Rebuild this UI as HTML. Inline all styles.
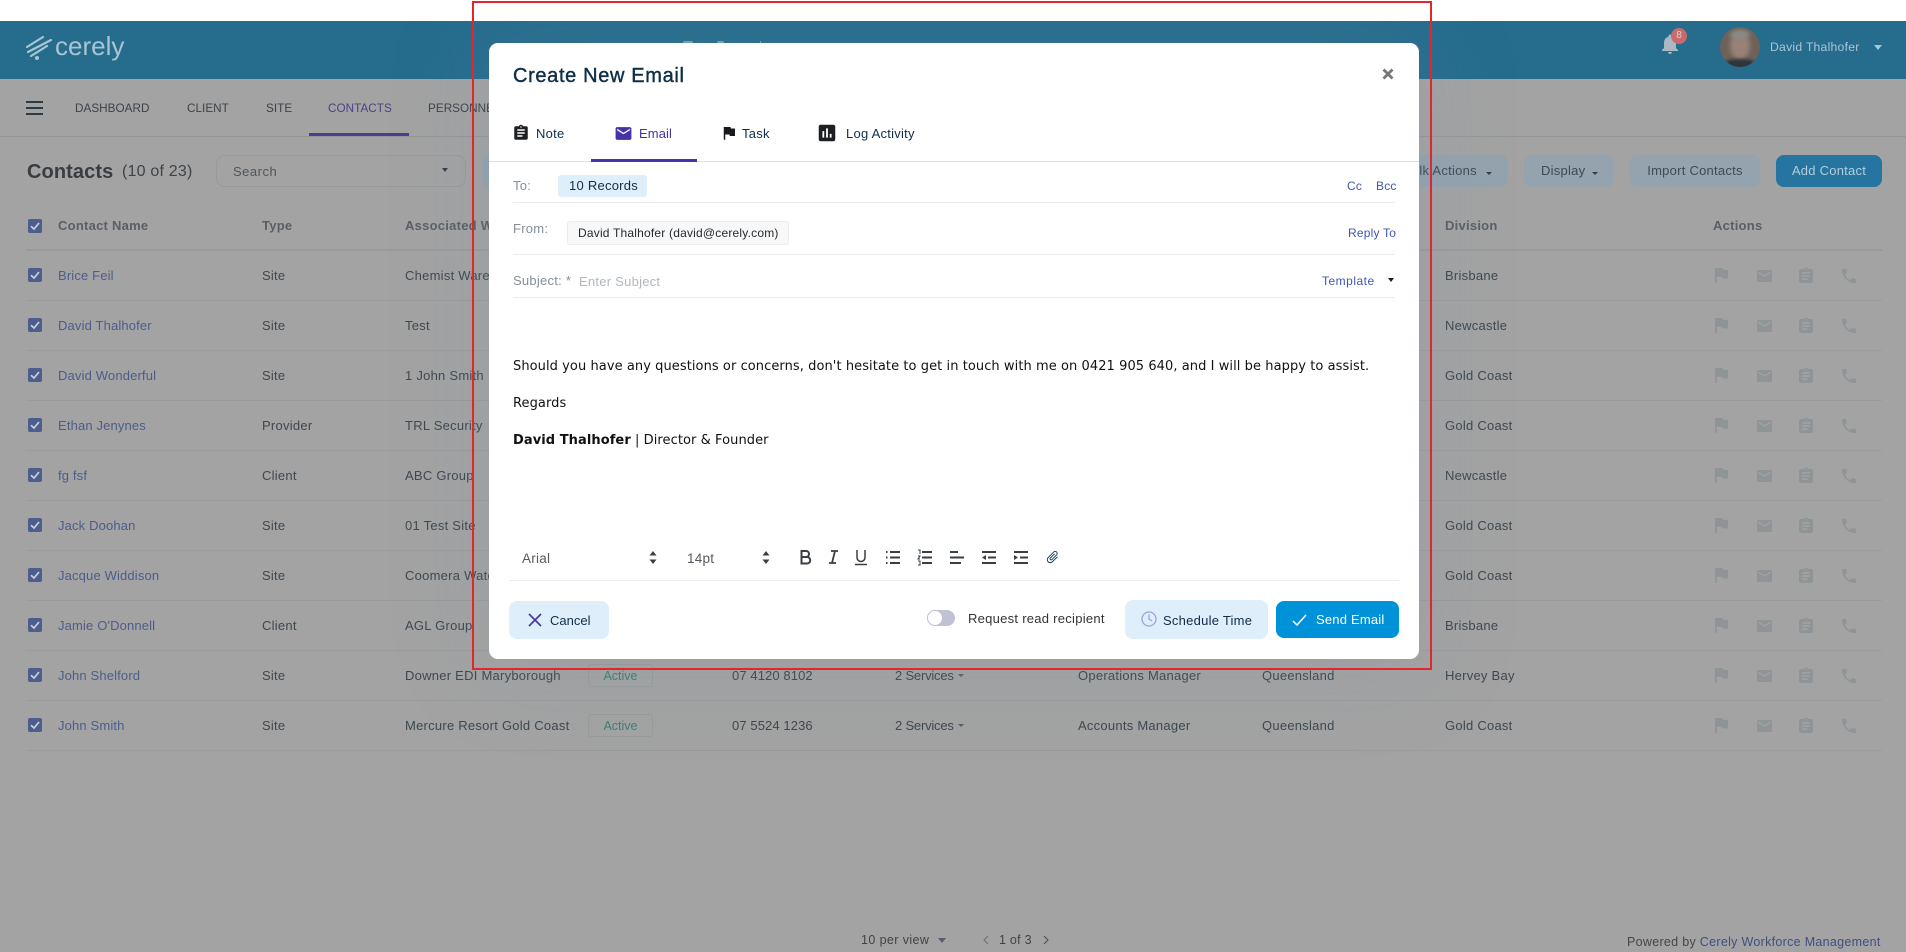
<!DOCTYPE html>
<html><head><meta charset="utf-8"><title>Create New Email</title>
<style>
*{box-sizing:border-box}
html,body{margin:0;padding:0;width:1906px;height:952px;overflow:hidden;background:#a3a3a3;font-family:"Liberation Sans",sans-serif}
#top{position:absolute;left:0;top:0;width:1906px;height:21px;background:#fff;z-index:5}
#hd{position:absolute;left:0;top:21px;width:1906px;height:58px;background:#256c8d}
.t{position:absolute;white-space:nowrap;line-height:20px;font-size:13px;letter-spacing:.25px;color:#3d4850;transform:translateY(1px)}
.a{position:absolute;display:block}
.nav{font-size:11.7px;color:#3c4247;top:98px;letter-spacing:.05px}
.hline{position:absolute;left:26px;width:1856px;height:1px;background:#999b9c}
.th{top:215px;font-weight:bold;color:#595f67;font-size:13px;letter-spacing:.25px}
.r{position:absolute;left:0;width:1906px;height:50px}
.r .t{top:15px}
.cb{position:absolute;left:28px;top:18px;width:14px;height:14px;border-radius:2px;background:#4c5d8e}
.cb svg{position:absolute;left:2px;top:2px}
.n{left:58px;color:#4c5d8c;letter-spacing:.15px}
.ty{left:262px}.as{left:405px}.ph{left:732px;letter-spacing:.1px}.sv{left:895px;letter-spacing:-.2px}.po{left:1078px}.st{left:1262px}.di{left:1445px}
.ac{position:absolute;left:1710px;top:15px;width:160px;height:24px;overflow:visible}
.stat{position:absolute;left:588px;top:14px;width:65px;height:23px;border:1px solid #969c9a;border-radius:3px;text-align:center;line-height:22px;color:#3d7f75;font-size:12.5px}
.btn{position:absolute;top:155px;height:32px;border-radius:8px;background:#94a3ae;text-align:center;line-height:32px;font-size:13px;color:#3e4a54;letter-spacing:.25px}
#modal{position:absolute;left:489px;top:43px;width:930px;height:616px;background:#fff;border-radius:9px;box-shadow:0 0 90px 15px rgba(120,145,170,.16)}
.m{color:#0e2e48}
.lbl{color:#84909a;font-size:13px}
.lnk{color:#3f57b0;font-size:12px;letter-spacing:.2px}
.ln{position:absolute;height:1px;background:#e9ebee}
#red{position:absolute;left:472px;top:1px;width:960px;height:669px;border:2px solid #e3262b;pointer-events:none;z-index:6}
.ed{font-family:"DejaVu Sans",sans-serif;font-size:13px;color:#111;letter-spacing:.07px;transform:none}
</style></head><body>
<svg width="0" height="0" style="position:absolute">
<defs>
<symbol id="flag" viewBox="0 0 24 24"><path d="M14.4 6L14 4H5v17h2v-7h5.6l.4 2h7V6z"/></symbol>
<symbol id="mail" viewBox="0 0 24 24"><path d="M20 4H4c-1.1 0-2 .9-2 2v12c0 1.1.9 2 2 2h16c1.1 0 2-.9 2-2V6c0-1.1-.9-2-2-2zm0 4l-8 5-8-5V6l8 5 8-5v2z"/></symbol>
<symbol id="clip" viewBox="0 0 24 24"><path d="M19 3h-4.18C14.4 1.84 13.3 1 12 1c-1.3 0-2.4.84-2.82 2H5c-1.1 0-2 .9-2 2v14c0 1.1.9 2 2 2h14c1.1 0 2-.9 2-2V5c0-1.1-.9-2-2-2zm-7 0c.55 0 1 .45 1 1s-.45 1-1 1-1-.45-1-1 .45-1 1-1zm2 14H7v-2h7v2zm3-4H7v-2h10v2zm0-4H7V7h10v2z"/></symbol>
<symbol id="phone" viewBox="0 0 24 24"><path d="M6.62 10.79c1.44 2.83 3.76 5.14 6.59 6.59l2.2-2.2c.27-.27.67-.36 1.02-.24 1.12.37 2.33.57 3.57.57.55 0 1 .45 1 1V20c0 .55-.45 1-1 1-9.39 0-17-7.61-17-17 0-.55.45-1 1-1h3.5c.55 0 1 .45 1 1 0 1.25.2 2.45.57 3.57.11.35.03.74-.25 1.02l-2.2 2.2z"/></symbol>
<symbol id="poll" viewBox="0 0 24 24"><path d="M19 3H5c-1.1 0-2 .9-2 2v14c0 1.1.9 2 2 2h14c1.1 0 2-.9 2-2V5c0-1.1-.9-2-2-2zM9 17H7v-7h2v7zm4 0h-2V7h2v10zm4 0h-2v-4h2v4z"/></symbol>
<symbol id="acts" viewBox="0 0 160 24" overflow="visible"><g fill="#8f9497">
<use href="#flag" x=".6" y="-.5" width="21" height="21"/><use href="#mail" x="45.500" y="2" width="18" height="18"/><use href="#clip" x="86.700" y="1.700" width="18.600" height="18.600"/><use href="#phone" x="129.600" y="1.500" width="19" height="19"/></g></symbol>
<symbol id="chk" viewBox="0 0 10 10"><path d="M1 5.2L4 8l5-6" fill="none" stroke="#c9cfdc" stroke-width="1.7"/></symbol>
</defs></svg>

<div id="top"></div>
<div id="hd"></div>
<svg class="a" style="left:26px;top:34px" width="27" height="27" viewBox="0 0 27 27" fill="none" stroke="#a9c5d4" stroke-width="2.2" stroke-linecap="round"><path d="M1 13L17 3M2 18L25 6M5 22L21 12"/><circle cx="11" cy="24" r="2" fill="#a9c5d4" stroke="none"/></svg>
<span class="t" style="left:55px;top:34px;font-size:26px;line-height:24px;color:#a9c5d4;letter-spacing:0;transform:none">cerely</span>
<svg class="a" style="left:1658px;top:32px" width="24" height="24" viewBox="0 0 24 24" fill="#a9b9c2"><path d="M12 22c1.1 0 2-.9 2-2h-4c0 1.1.89 2 2 2zm6-6v-5c0-3.07-1.64-5.64-4.5-6.32V4c0-.83-.67-1.5-1.5-1.5s-1.5.67-1.5 1.5v.68C7.63 5.36 6 7.92 6 11v5l-2 2v1h16v-1l-2-2z"/></svg>
<div class="a" style="left:1671px;top:28px;width:16px;height:16px;border-radius:50%;background:#c96b6e;color:#e4c9c9;font-size:10px;line-height:16px;text-align:center">8</div>
<div class="a" style="left:1720px;top:27px;width:40px;height:40px;border-radius:50%;overflow:hidden;background:#6c6259">
<div class="a" style="left:10px;top:5px;width:20px;height:28px;border-radius:50%;background:#988176;filter:blur(2px)"></div>
<div class="a" style="left:10px;top:3px;width:20px;height:9px;border-radius:50%;background:#8a8a86;filter:blur(2px)"></div>
<div class="a" style="left:4px;top:32px;width:32px;height:14px;background:#2f353c;border-radius:40%;filter:blur(1.5px)"></div></div>
<span class="t" style="left:1770px;top:37px;font-size:12.2px;color:#a9c5d4;transform:none">David Thalhofer</span>
<div class="a" style="left:1874px;top:45px;border:4px solid transparent;border-top:5px solid #a9c5d4;border-left-width:4px;border-right-width:4px"></div>

<div class="a" style="left:26px;top:101px;width:17px;height:2px;background:#2d3b45"></div>
<div class="a" style="left:26px;top:107px;width:17px;height:2px;background:#2d3b45"></div>
<div class="a" style="left:26px;top:113px;width:17px;height:2px;background:#2d3b45"></div>
<span class="t nav" style="left:75px">DASHBOARD</span>
<span class="t nav" style="left:187px">CLIENT</span>
<span class="t nav" style="left:266px">SITE</span>
<span class="t nav" style="left:328px;color:#4a4288">CONTACTS</span>
<span class="t nav" style="left:428px">PERSONNEL</span>
<div class="a" style="left:0;top:136px;width:1906px;height:1px;background:#94989c"></div>
<div class="a" style="left:309px;top:133px;width:100px;height:3px;background:#4a3d8c"></div>

<span class="t" style="left:27px;top:161px;font-size:20px;font-weight:bold;color:#383d41;letter-spacing:.1px">Contacts</span>
<span class="t" style="left:122px;top:161px;font-size:16px;color:#3d4348;letter-spacing:.2px">(10 of 23)</span>
<div class="a" style="left:216px;top:155px;width:250px;height:32px;border:1px solid #979a9c;border-radius:9px"></div>
<span class="t" style="left:233px;top:161px;color:#4e5459;letter-spacing:.5px">Search</span>
<div class="a" style="left:442px;top:168px;border:3.5px solid transparent;border-top:4px solid #333d45"></div>
<div class="btn" style="left:482px;width:1026px"></div>
<span class="t" style="left:1403px;top:160px;color:#3e4a54;font-size:13px">Bulk Actions</span>
<div class="a" style="left:1486px;top:172px;border:3px solid transparent;border-top:3.5px solid #333d45"></div>
<div class="btn" style="left:1524px;width:90px;text-align:left;padding-left:17px">Display</div>
<div class="a" style="left:1592px;top:172px;border:3px solid transparent;border-top:3.5px solid #333d45"></div>
<div class="btn" style="left:1630px;width:130px">Import Contacts</div>
<div class="btn" style="left:1776px;width:106px;background:#2675a0;color:#b3cdd9">Add Contact</div>

<div class="cb" style="top:219px"><svg width="10" height="10"><use href="#chk"/></svg></div>
<span class="t th" style="left:58px">Contact Name</span>
<span class="t th" style="left:262px">Type</span>
<span class="t th" style="left:405px">Associated With</span>
<span class="t th" style="left:1445px">Division</span>
<span class="t th" style="left:1713px">Actions</span>
<div class="hline" style="top:249px;height:2px"></div>

<div class="r" style="top:250px"><div class="cb"><svg width="10" height="10"><use href="#chk"/></svg></div><span class="t n">Brice Feil</span><span class="t ty">Site</span><span class="t as">Chemist Warehouse</span><span class="t di">Brisbane</span><svg class="ac"><use href="#acts"/></svg></div>
<div class="hline" style="top:300px"></div>
<div class="r" style="top:300px"><div class="cb"><svg width="10" height="10"><use href="#chk"/></svg></div><span class="t n">David Thalhofer</span><span class="t ty">Site</span><span class="t as">Test</span><span class="t di">Newcastle</span><svg class="ac"><use href="#acts"/></svg></div>
<div class="hline" style="top:350px"></div>
<div class="r" style="top:350px"><div class="cb"><svg width="10" height="10"><use href="#chk"/></svg></div><span class="t n">David Wonderful</span><span class="t ty">Site</span><span class="t as">1 John Smith</span><span class="t di">Gold Coast</span><svg class="ac"><use href="#acts"/></svg></div>
<div class="hline" style="top:400px"></div>
<div class="r" style="top:400px"><div class="cb"><svg width="10" height="10"><use href="#chk"/></svg></div><span class="t n">Ethan Jenynes</span><span class="t ty">Provider</span><span class="t as">TRL Security</span><span class="t di">Gold Coast</span><svg class="ac"><use href="#acts"/></svg></div>
<div class="hline" style="top:450px"></div>
<div class="r" style="top:450px"><div class="cb"><svg width="10" height="10"><use href="#chk"/></svg></div><span class="t n">fg fsf</span><span class="t ty">Client</span><span class="t as">ABC Group</span><span class="t di">Newcastle</span><svg class="ac"><use href="#acts"/></svg></div>
<div class="hline" style="top:500px"></div>
<div class="r" style="top:500px"><div class="cb"><svg width="10" height="10"><use href="#chk"/></svg></div><span class="t n">Jack Doohan</span><span class="t ty">Site</span><span class="t as">01 Test Site</span><span class="t di">Gold Coast</span><svg class="ac"><use href="#acts"/></svg></div>
<div class="hline" style="top:550px"></div>
<div class="r" style="top:550px"><div class="cb"><svg width="10" height="10"><use href="#chk"/></svg></div><span class="t n">Jacque Widdison</span><span class="t ty">Site</span><span class="t as">Coomera Waters</span><span class="t di">Gold Coast</span><svg class="ac"><use href="#acts"/></svg></div>
<div class="hline" style="top:600px"></div>
<div class="r" style="top:600px"><div class="cb"><svg width="10" height="10"><use href="#chk"/></svg></div><span class="t n">Jamie O'Donnell</span><span class="t ty">Client</span><span class="t as">AGL Group</span><span class="t di">Brisbane</span><svg class="ac"><use href="#acts"/></svg></div>
<div class="hline" style="top:650px"></div>
<div class="r" style="top:650px"><div class="cb"><svg width="10" height="10"><use href="#chk"/></svg></div><span class="t n">John Shelford</span><span class="t ty">Site</span><span class="t as">Downer EDI Maryborough</span><div class="stat">Active</div><span class="t ph">07 4120 8102</span><span class="t sv">2 Services</span><div class="a" style="left:958px;top:24px;border:3px solid transparent;border-top:3.5px solid #56616a"></div><span class="t po">Operations Manager</span><span class="t st">Queensland</span><span class="t di">Hervey Bay</span><svg class="ac"><use href="#acts"/></svg></div>
<div class="hline" style="top:700px"></div>
<div class="r" style="top:700px"><div class="cb"><svg width="10" height="10"><use href="#chk"/></svg></div><span class="t n">John Smith</span><span class="t ty">Site</span><span class="t as">Mercure Resort Gold Coast</span><div class="stat">Active</div><span class="t ph">07 5524 1236</span><span class="t sv">2 Services</span><div class="a" style="left:958px;top:24px;border:3px solid transparent;border-top:3.5px solid #56616a"></div><span class="t po">Accounts Manager</span><span class="t st">Queensland</span><span class="t di">Gold Coast</span><svg class="ac"><use href="#acts"/></svg></div>
<div class="hline" style="top:750px"></div>

<span class="t" style="left:861px;top:930px;font-size:12.5px;color:#3f4348;letter-spacing:.4px;transform:none">10 per view</span>
<div class="a" style="left:938px;top:938px;border:4px solid transparent;border-top:5px solid #585d70"></div>
<svg class="a" style="left:982px;top:935px" width="8" height="10" fill="none" stroke="#6a6e72" stroke-width="1"><path d="M6 1L2 5l4 4"/></svg>
<span class="t" style="left:999px;top:930px;font-size:12.5px;color:#3f4348;transform:none">1 of 3</span>
<svg class="a" style="left:1042px;top:935px" width="8" height="10" fill="none" stroke="#4a4e52" stroke-width="1"><path d="M2 1l4 4-4 4"/></svg>
<span class="t" style="left:1627px;top:932px;font-size:12.5px;color:#42474c;letter-spacing:.3px;transform:none">Powered by <span style="color:#3f5080">Cerely Workforce Management</span></span>

<div class="a" style="left:683px;top:41px;width:10px;height:2px;border-radius:5px 5px 0 0;background:#7f9fb0"></div>
<div class="a" style="left:717px;top:41px;width:7px;height:2px;border-radius:4px 4px 0 0;background:#7f9fb0"></div>
<div class="a" style="left:760px;top:41px;width:1px;height:2px;background:#7f9fb0"></div>

<div id="modal"></div>
<span class="t m" style="left:513px;top:65px;font-size:20px;letter-spacing:.65px;-webkit-text-stroke:.4px #0e2e48">Create New Email</span>
<svg class="a" style="left:1382px;top:68px" width="12" height="12" stroke="#777" stroke-width="2.8"><path d="M1.5 1.5l9 9M10.5 1.5l-9 9"/></svg>

<svg class="a" style="left:512px;top:124px" width="18" height="18" fill="#1d1f22"><use href="#clip"/></svg>
<span class="t m" style="left:536px;top:123px">Note</span>
<svg class="a" style="left:614px;top:124px" width="19" height="19" fill="#4533a8"><use href="#mail"/></svg>
<span class="t" style="left:639px;top:123px;color:#4533a8;letter-spacing:.1px">Email</span>
<svg class="a" style="left:720px;top:124px" width="18" height="18" fill="#17191c"><use href="#flag"/></svg>
<span class="t m" style="left:742px;top:123px">Task</span>
<svg class="a" style="left:816px;top:122px" width="22" height="22" fill="#1d1f22"><use href="#poll"/></svg>
<span class="t m" style="left:846px;top:123px">Log Activity</span>
<div class="a" style="left:489px;top:161px;width:930px;height:1px;background:#dfe0e7"></div>
<div class="a" style="left:591px;top:159px;width:106px;height:3px;background:#4533a8"></div>

<span class="t lbl" style="left:513px;top:175px">To:</span>
<div class="a" style="left:558px;top:175px;width:89px;height:22px;background:#deeefb;border-radius:3px"></div>
<span class="t m" style="left:569px;top:175px">10 Records</span>
<span class="t lnk" style="left:1347px;top:175px">Cc</span>
<span class="t lnk" style="left:1376px;top:175px">Bcc</span>
<div class="ln" style="left:513px;top:202px;width:882px"></div>

<span class="t lbl" style="left:513px;top:218px">From:</span>
<div class="a" style="left:567px;top:221px;width:222px;height:24px;background:#f8f8f8;border:1px solid #ececec;border-radius:3px"></div>
<span class="t m" style="left:578px;top:222px;font-size:12px;letter-spacing:.2px;color:#222a30">David Thalhofer (david@cerely.com)</span>
<span class="t lnk" style="left:1348px;top:222px">Reply To</span>
<div class="ln" style="left:513px;top:254px;width:882px"></div>

<span class="t lbl" style="left:513px;top:270px">Subject: *</span>
<span class="t" style="left:579px;top:271px;color:#b0b8bf">Enter Subject</span>
<span class="t lnk" style="left:1322px;top:270px;letter-spacing:.5px">Template</span>
<div class="a" style="left:1388px;top:278px;border:3px solid transparent;border-top:4px solid #12202c"></div>
<div class="ln" style="left:513px;top:297px;width:882px"></div>

<span class="t ed" style="left:513px;top:357px">Should you have any questions or concerns, don't hesitate to get in touch with me on 0421 905 640, and I will be happy to assist.</span>
<span class="t ed" style="left:513px;top:394px">Regards</span>
<span class="t ed" style="left:513px;top:431px"><b>David Thalhofer</b> | Director &amp; Founder</span>

<span class="t" style="left:522px;top:548px;color:#555b60;font-size:13.5px">Arial</span>
<svg class="a" style="left:649px;top:551px" width="8" height="13" fill="#3a3f44"><path d="M4 0l3.5 4.5h-7zM4 13L.5 8.5h7z"/></svg>
<span class="t" style="left:687px;top:548px;color:#555b60;font-size:13.5px">14pt</span>
<svg class="a" style="left:762px;top:551px" width="8" height="13" fill="#3a3f44"><path d="M4 0l3.5 4.5h-7zM4 13L.5 8.5h7z"/></svg>
<svg class="a" style="left:798px;top:549px" width="240" height="18" fill="none" stroke="#3a3f44" stroke-width="2">
<path d="M3.500 2h4.500a3 3 0 0 1 0 6H3.500h5.500a3.200 3.200 0 0 1 0 6.500H3.500zM3.500 1v14"/>
<path d="M33 2h7M31 14h7M37 2l-3 12" stroke-width="1.800"/>
<path d="M59 1v7.500a4 4 0 0 0 8 0V1M57 15.500h12" stroke-width="1.500"/>
<path d="M88 3h1.500M88 8.500h1.500M88 14h1.500M92 3h10M92 8.500h10M92 14h10"/>
<path d="M124 3h10M124 8.500h10M124 14h10"/>
<path d="M120 1h2v4M120 7h2l-2 3h2M120 12h2v4h-2" stroke-width="1"/>
<path d="M152 3h8M152 8.500h14M152 14h11" />
<path d="M184 3h14M190 8.500h8M184 14h14"/>
<path d="M216 3h14M222 8.500h8M216 14h14"/>
<path d="M188 6l-4 2.500 4 2.500z" fill="#3a3f44" stroke="none"/>
<path d="M216 6l4 2.500-4 2.500z" fill="#3a3f44" stroke="none"/>
</svg>
<svg class="a" style="left:1045px;top:549px;transform:rotate(45deg)" width="15" height="16" viewBox="0 0 24 24" fill="#15405a"><path d="M16.5 6v11.5c0 2.21-1.79 4-4 4s-4-1.790-4-4V5c0-1.380 1.120-2.500 2.500-2.500s2.500 1.120 2.500 2.500v10.500c0 .55-.45 1-1 1s-1-.45-1-1V6H10v9.500c0 1.380 1.120 2.500 2.500 2.500s2.500-1.120 2.500-2.500V5c0-2.210-1.790-4-4-4S7 2.790 7 5v12.500c0 3.040 2.460 5.500 5.500 5.500s5.500-2.460 5.500-5.500V6h-1.500z"/></svg>
<div class="ln" style="left:509px;top:580px;width:890px;background:#eeeeef"></div>

<div class="a" style="left:509px;top:601px;width:100px;height:38px;background:#deeefb;border-radius:8px"></div>
<svg class="a" style="left:528px;top:613px" width="14" height="14" stroke="#4533a8" stroke-width="1.600" fill="none"><path d="M1 1l12 12M13 1L1 13"/></svg>
<span class="t m" style="left:550px;top:610px;letter-spacing:0">Cancel</span>
<div class="a" style="left:927px;top:610px;width:28px;height:16px;background:#c1c1d6;border-radius:8px"></div>
<div class="a" style="left:927px;top:610px;width:16px;height:16px;background:#fff;border:1px solid #c1c1d6;border-radius:50%"></div>
<span class="t" style="left:968px;top:609px;color:#333;font-size:13px;letter-spacing:.27px;transform:none">Request read recipient</span>
<div class="a" style="left:1125px;top:600px;width:143px;height:39px;background:#deeefb;border-radius:8px"></div>
<svg class="a" style="left:1141px;top:611px" width="16" height="16" fill="none" stroke="#9da6dc" stroke-width="1.300"><circle cx="8" cy="8" r="7"/><path d="M8 3.500V8l3 2"/></svg>
<span class="t m" style="left:1163px;top:610px">Schedule Time</span>
<div class="a" style="left:1276px;top:601px;width:123px;height:37px;background:#0092d8;border-radius:8px"></div>
<svg class="a" style="left:1292px;top:614px" width="15" height="12" fill="none" stroke="#fff" stroke-width="1.500"><path d="M1 7l4 4 9-10"/></svg>
<span class="t" style="left:1316px;top:609px;color:#fff;letter-spacing:.2px">Send Email</span>

<div id="red"></div>
</body></html>
